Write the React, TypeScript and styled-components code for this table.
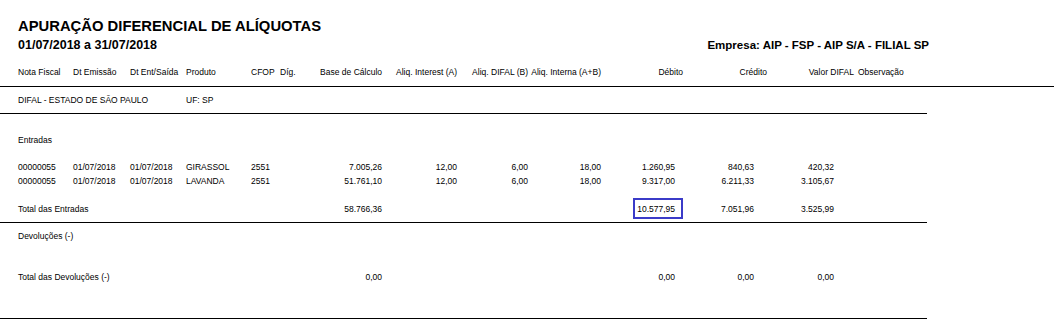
import React from 'react';
import { styled, createGlobalStyle } from "styled-components";

const GlobalStyle = createGlobalStyle`
    body {
        margin: 0;
        background: #fff;
    }
`;

const COLS = "55px 57px 56px 65px 29px 30px 72px 75px 71px 73px 82px 84px 87px 1fr";

interface Line {
    nota: string;
    emissao: string;
    entrada: string;
    produto: string;
    cfop: string;
    base: string;
    aliqA: string;
    aliqB: string;
    aliqInt: string;
    debito: string;
    credito: string;
    difal: string;
}

const entradas: Line[] = [
    { nota: "00000055", emissao: "01/07/2018", entrada: "01/07/2018", produto: "GIRASSOL", cfop: "2551", base: "7.005,26", aliqA: "12,00", aliqB: "6,00", aliqInt: "18,00", debito: "1.260,95", credito: "840,63", difal: "420,32" },
    { nota: "00000055", emissao: "01/07/2018", entrada: "01/07/2018", produto: "LAVANDA", cfop: "2551", base: "51.761,10", aliqA: "12,00", aliqB: "6,00", aliqInt: "18,00", debito: "9.317,00", credito: "6.211,33", difal: "3.105,67" },
];

export default function App() {
    return <>
        <GlobalStyle />
        <Report>
            <TitleBlock>
                <Title>APURAÇÃO DIFERENCIAL DE ALÍQUOTAS</Title>
                <SubRow>
                    <Period>01/07/2018 a 31/07/2018</Period>
                    <Company>Empresa: AIP - FSP - AIP S/A - FILIAL SP</Company>
                </SubRow>
            </TitleBlock>

            <HeaderBar>
                <Cell>Nota Fiscal</Cell>
                <Cell>Dt Emissão</Cell>
                <Cell>Dt Ent/Saída</Cell>
                <Cell>Produto</Cell>
                <Cell>CFOP</Cell>
                <Cell>Díg.</Cell>
                <Cell $right>Base de Cálculo</Cell>
                <Cell $right>Aliq. Interest (A)</Cell>
                <Cell $right>Aliq. DIFAL (B)</Cell>
                <Cell $right>Aliq. Interna (A+B)</Cell>
                <Cell $right $pr={0}>Débito</Cell>
                <Cell $right $pr={0}>Crédito</Cell>
                <Cell $right $pr={0}>Valor DIFAL</Cell>
                <Cell $pl={4}>Observação</Cell>
            </HeaderBar>

            <Section $pt={7} $pb={6}>
                <Row>
                    <Cell $span="1 / 4">DIFAL - ESTADO DE SÃO PAULO</Cell>
                    <Cell>UF: SP</Cell>
                </Row>
            </Section>

            <Section $pt={20} $pb={6}>
                <Row>
                    <Cell $span="1 / 7">Entradas</Cell>
                </Row>
                <Block $mt={14}>
                    {entradas.map((l, i) => (
                        <Row key={i} $h={14}>
                            <Cell>{l.nota}</Cell>
                            <Cell>{l.emissao}</Cell>
                            <Cell>{l.entrada}</Cell>
                            <Cell>{l.produto}</Cell>
                            <Cell>{l.cfop}</Cell>
                            <Cell></Cell>
                            <Cell $right>{l.base}</Cell>
                            <Cell $right>{l.aliqA}</Cell>
                            <Cell $right>{l.aliqB}</Cell>
                            <Cell $right>{l.aliqInt}</Cell>
                            <Cell $right $pr={8}>{l.debito}</Cell>
                            <Cell $right $pr={13}>{l.credito}</Cell>
                            <Cell $right $pr={20}>{l.difal}</Cell>
                        </Row>
                    ))}
                </Block>
                <Block $mt={14}>
                    <Row>
                        <Cell $span="1 / 7">Total das Entradas</Cell>
                        <Cell $right>58.766,36</Cell>
                        <Cell $span="8 / 11"></Cell>
                        <Cell $right $pr={8} $marked>10.577,95</Cell>
                        <Cell $right $pr={13}>7.051,96</Cell>
                        <Cell $right $pr={20}>3.525,99</Cell>
                    </Row>
                </Block>
            </Section>

            <Section $pt={7} $pb={34}>
                <Row>
                    <Cell $span="1 / 7">Devoluções (-)</Cell>
                </Row>
                <Block $mt={28}>
                    <Row>
                        <Cell $span="1 / 7">Total das Devoluções (-)</Cell>
                        <Cell $right>0,00</Cell>
                        <Cell $span="8 / 11"></Cell>
                        <Cell $right $pr={8}>0,00</Cell>
                        <Cell $right $pr={13}>0,00</Cell>
                        <Cell $right $pr={20}>0,00</Cell>
                    </Row>
                </Block>
            </Section>
        </Report>
    </>
}

const Report = styled.div`
    width: 1054px;
    font-family: "Liberation Sans", Arial, sans-serif;
    color: #000;
`;

const TitleBlock = styled.div`
    padding: 17px 0 0 18px;
`;

const Title = styled.h1`
    margin: 0;
    font-size: 14.8px;
    line-height: 18px;
    font-weight: bold;
`;

const SubRow = styled.div`
    margin-top: 3px;
    width: 911px;
    display: flex;
    justify-content: space-between;
    align-items: baseline;
    line-height: 15px;
    font-weight: bold;
`;

const Period = styled.span`
    font-size: 12.5px;
`;

const Company = styled.span`
    font-size: 11.5px;
`;

const Row = styled.div<{ $h?: number }>`
    display: grid;
    grid-template-columns: ${COLS};
    height: ${p => p.$h ?? 13}px;
    line-height: 13px;
    padding-left: 18px;
    font-size: 8.5px;
    white-space: nowrap;
`;

const HeaderBar = styled(Row)`
    margin-top: 13px;
    height: 20px;
    border-bottom: 1px solid #000;
`;

const Section = styled.section<{ $pt: number; $pb: number }>`
    width: 927px;
    padding: ${p => p.$pt}px 0 ${p => p.$pb}px;
    border-bottom: 1px solid #000;
`;

const Block = styled.div<{ $mt: number }>`
    margin-top: ${p => p.$mt}px;
`;

const Cell = styled.div<{ $right?: boolean; $pr?: number; $pl?: number; $span?: string; $marked?: boolean }>`
    position: relative;
    text-align: ${p => p.$right ? "right" : "left"};
    padding-right: ${p => p.$pr ?? 0}px;
    padding-left: ${p => p.$pl ?? 0}px;
    ${p => p.$span ? `grid-column: ${p.$span};` : ""}
    ${p => p.$marked ? `
        &::after {
            content: "";
            position: absolute;
            right: 0;
            top: -5px;
            width: 50px;
            height: 21px;
            box-sizing: border-box;
            border: 2px solid #3b3bc8;
        }
    ` : ""}
`;
